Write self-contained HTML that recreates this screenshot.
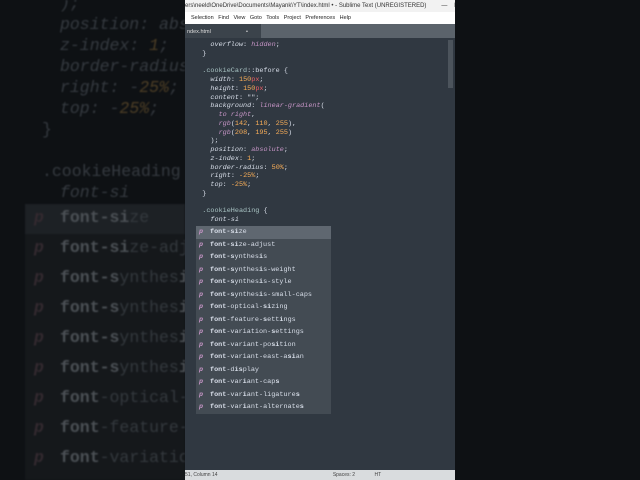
<!DOCTYPE html>
<html><head><meta charset="utf-8"><style>
*{margin:0;padding:0;box-sizing:border-box}
body{width:640px;height:480px;background:#0e1114;position:relative;overflow:hidden;font-family:"Liberation Mono",monospace}
.bg{position:absolute;left:0;top:0;width:185px;height:480px;overflow:hidden;filter:blur(0.7px)}
.bg .l{position:absolute;white-space:pre;font-size:16.5px;color:#363b41;font-style:italic}
.bg .n{color:#4e3f26}
.pop{position:absolute;left:25px;top:204px;width:170px;height:290px;background:#15181b}
.pop .sel{position:absolute;left:0;top:0;width:170px;height:30px;background:#1d2125}
.bg .r{position:absolute;left:60px;font-size:16.5px;color:#34393e;white-space:pre}
.bg .r b{color:#4b5055}
.bg .p{position:absolute;left:34px;font-size:16.5px;color:#33292f;font-style:italic;font-weight:bold}
.win{position:absolute;left:185px;top:0;width:270px;height:480px;background:#303841;overflow:hidden}
.title{position:absolute;top:0;left:0;width:270px;height:12px;background:#f2f2f2;font:6px "Liberation Sans",sans-serif;color:#333;padding:2px 0 0 0;white-space:nowrap}
.menu{position:absolute;top:12px;left:0;width:270px;height:12px;background:#fff;font:5.5px "Liberation Sans",sans-serif;color:#222;white-space:pre;padding:3px 0 0 6px}
.tabs{position:absolute;top:24px;left:0;width:270px;height:14px;background:#5b636b}
.tab{position:absolute;left:0;top:0;width:76px;height:14px;background:#3b434b;font:5.5px "Liberation Sans",sans-serif;color:#ddd;padding:5px 0 0 2px}
.code{position:absolute;left:5px;top:41px;font-size:6.8px;line-height:8.75px;white-space:pre;color:#d8dee9}
.i{font-style:italic;color:#d8dee9}
.k{font-style:italic;color:#c594c5}
.o{color:#f9ae58}
.u{color:#ec5f66}
.s{color:#a9c4c4}
.cp{position:absolute;left:11px;top:226px;width:135px;height:188px;background:#434b53}
.cp .row{height:12.5px;font-size:6.8px;line-height:12.5px;white-space:pre;color:#d8dee9;padding-left:14px;position:relative}
.cp .row b{font-weight:bold}
.cp .row:before{content:"p";position:absolute;left:3px;color:#c594c5;font-style:italic;font-weight:bold}
.cp .row.on{background:#5f6770}
.status{position:absolute;left:0;top:470px;width:270px;height:10px;background:#d9dcde;font:5px "Liberation Sans",sans-serif;color:#444;padding:2px 0 0 0;white-space:pre}
.mm{position:absolute;left:263px;top:40px;width:5px;height:48px;background:#4c545c}
</style></head><body>
<div class="bg">
<div class="l" style="left:60px;top:-6px">);</div>
<div class="l" style="left:60px;top:15px">position: abs</div>
<div class="l" style="left:60px;top:36px">z-index: <span class="n">1</span>;</div>
<div class="l" style="left:60px;top:57px">border-radius</div>
<div class="l" style="left:60px;top:78px">right: -<span class="n">25%</span>;</div>
<div class="l" style="left:60px;top:99px">top: -<span class="n">25%</span>;</div>
<div class="l" style="left:42px;top:120px;font-style:normal">}</div>
<div class="l" style="left:42px;top:162px;font-style:normal">.cookieHeading</div>
<div class="l" style="left:60px;top:183px">font-si</div>
<div class="pop"><div class="sel"></div></div>
<div class="p" style="top:208px">p</div><div class="r" style="top:208px"><b>font-si</b>ze</div>
<div class="p" style="top:238px">p</div><div class="r" style="top:238px"><b>font-si</b>ze-adj</div>
<div class="p" style="top:268px">p</div><div class="r" style="top:268px"><b>font-s</b>ynthes<b>i</b></div>
<div class="p" style="top:298px">p</div><div class="r" style="top:298px"><b>font-s</b>ynthes<b>i</b></div>
<div class="p" style="top:328px">p</div><div class="r" style="top:328px"><b>font-s</b>ynthes<b>i</b></div>
<div class="p" style="top:358px">p</div><div class="r" style="top:358px"><b>font-s</b>ynthes<b>i</b></div>
<div class="p" style="top:388px">p</div><div class="r" style="top:388px"><b>font</b>-optical-</div>
<div class="p" style="top:418px">p</div><div class="r" style="top:418px"><b>font</b>-feature-</div>
<div class="p" style="top:448px">p</div><div class="r" style="top:448px"><b>font</b>-variatio</div>
</div>
<div class="win">
<div class="title">ers\neeld\OneDrive\Documents\Mayank\YT\index.html • - Sublime Text (UNREGISTERED)&nbsp;&nbsp;&nbsp;&nbsp;&nbsp;&nbsp;&nbsp;&nbsp;&nbsp;—&nbsp;&nbsp;&nbsp;&nbsp;☐</div>
<div class="menu">Selection   Find   View   Goto   Tools   Project   Preferences   Help</div>
<div class="tabs"><div class="tab">ndex.html&nbsp;&nbsp;&nbsp;&nbsp;&nbsp;&nbsp;&nbsp;&nbsp;&nbsp;&nbsp;&nbsp;&nbsp;&nbsp;&nbsp;&nbsp;&nbsp;&nbsp;&nbsp;&nbsp;&nbsp;&nbsp;&nbsp;&nbsp;•</div></div>
<div class="mm"></div>
<div class="code">     <span class="i">overflow</span>: <span class="k">hidden</span>;
   }

   <span class="s">.cookieCard</span>::before {
     <span class="i">width</span>: <span class="o">150</span><span class="u">px</span>;
     <span class="i">height</span>: <span class="o">150</span><span class="u">px</span>;
     <span class="i">content</span>: "";
     <span class="i">background</span>: <span class="k">linear-gradient</span>(
       <span class="k">to right</span>,
       <span class="k">rgb</span>(<span class="o">142</span>, <span class="o">110</span>, <span class="o">255</span>),
       <span class="k">rgb</span>(<span class="o">208</span>, <span class="o">195</span>, <span class="o">255</span>)
     );
     <span class="i">position</span>: <span class="k">absolute</span>;
     <span class="i">z-index</span>: <span class="o">1</span>;
     <span class="i">border-radius</span>: <span class="o">50%</span>;
     <span class="i">right</span>: <span class="o">-25%</span>;
     <span class="i">top</span>: <span class="o">-25%</span>;
   }

   <span class="s">.cookieHeading</span> {
     <span class="i">font-si</span></div>
<div class="cp">
<div class="row on"><b>font-si</b>ze</div>
<div class="row"><b>font-si</b>ze-adjust</div>
<div class="row"><b>font-s</b>ynthes<b>i</b>s</div>
<div class="row"><b>font-s</b>ynthes<b>i</b>s-weight</div>
<div class="row"><b>font-s</b>ynthes<b>i</b>s-style</div>
<div class="row"><b>font-s</b>ynthes<b>i</b>s-small-caps</div>
<div class="row"><b>font</b>-optical-<b>si</b>zing</div>
<div class="row"><b>font</b>-feature-<b>s</b>ett<b>i</b>ngs</div>
<div class="row"><b>font</b>-variation-<b>s</b>ettings</div>
<div class="row"><b>font</b>-variant-po<b>si</b>tion</div>
<div class="row"><b>font</b>-variant-east-a<b>si</b>an</div>
<div class="row"><b>font</b>-d<b>i</b><b>s</b>play</div>
<div class="row"><b>font</b>-var<b>i</b>ant-cap<b>s</b></div>
<div class="row"><b>font</b>-var<b>i</b>ant-ligature<b>s</b></div>
<div class="row"><b>font</b>-var<b>i</b>ant-alternate<b>s</b></div>
</div>
<div class="status">51, Column 14                                                                                   Spaces: 2              HT</div>
</div>
</body></html>
